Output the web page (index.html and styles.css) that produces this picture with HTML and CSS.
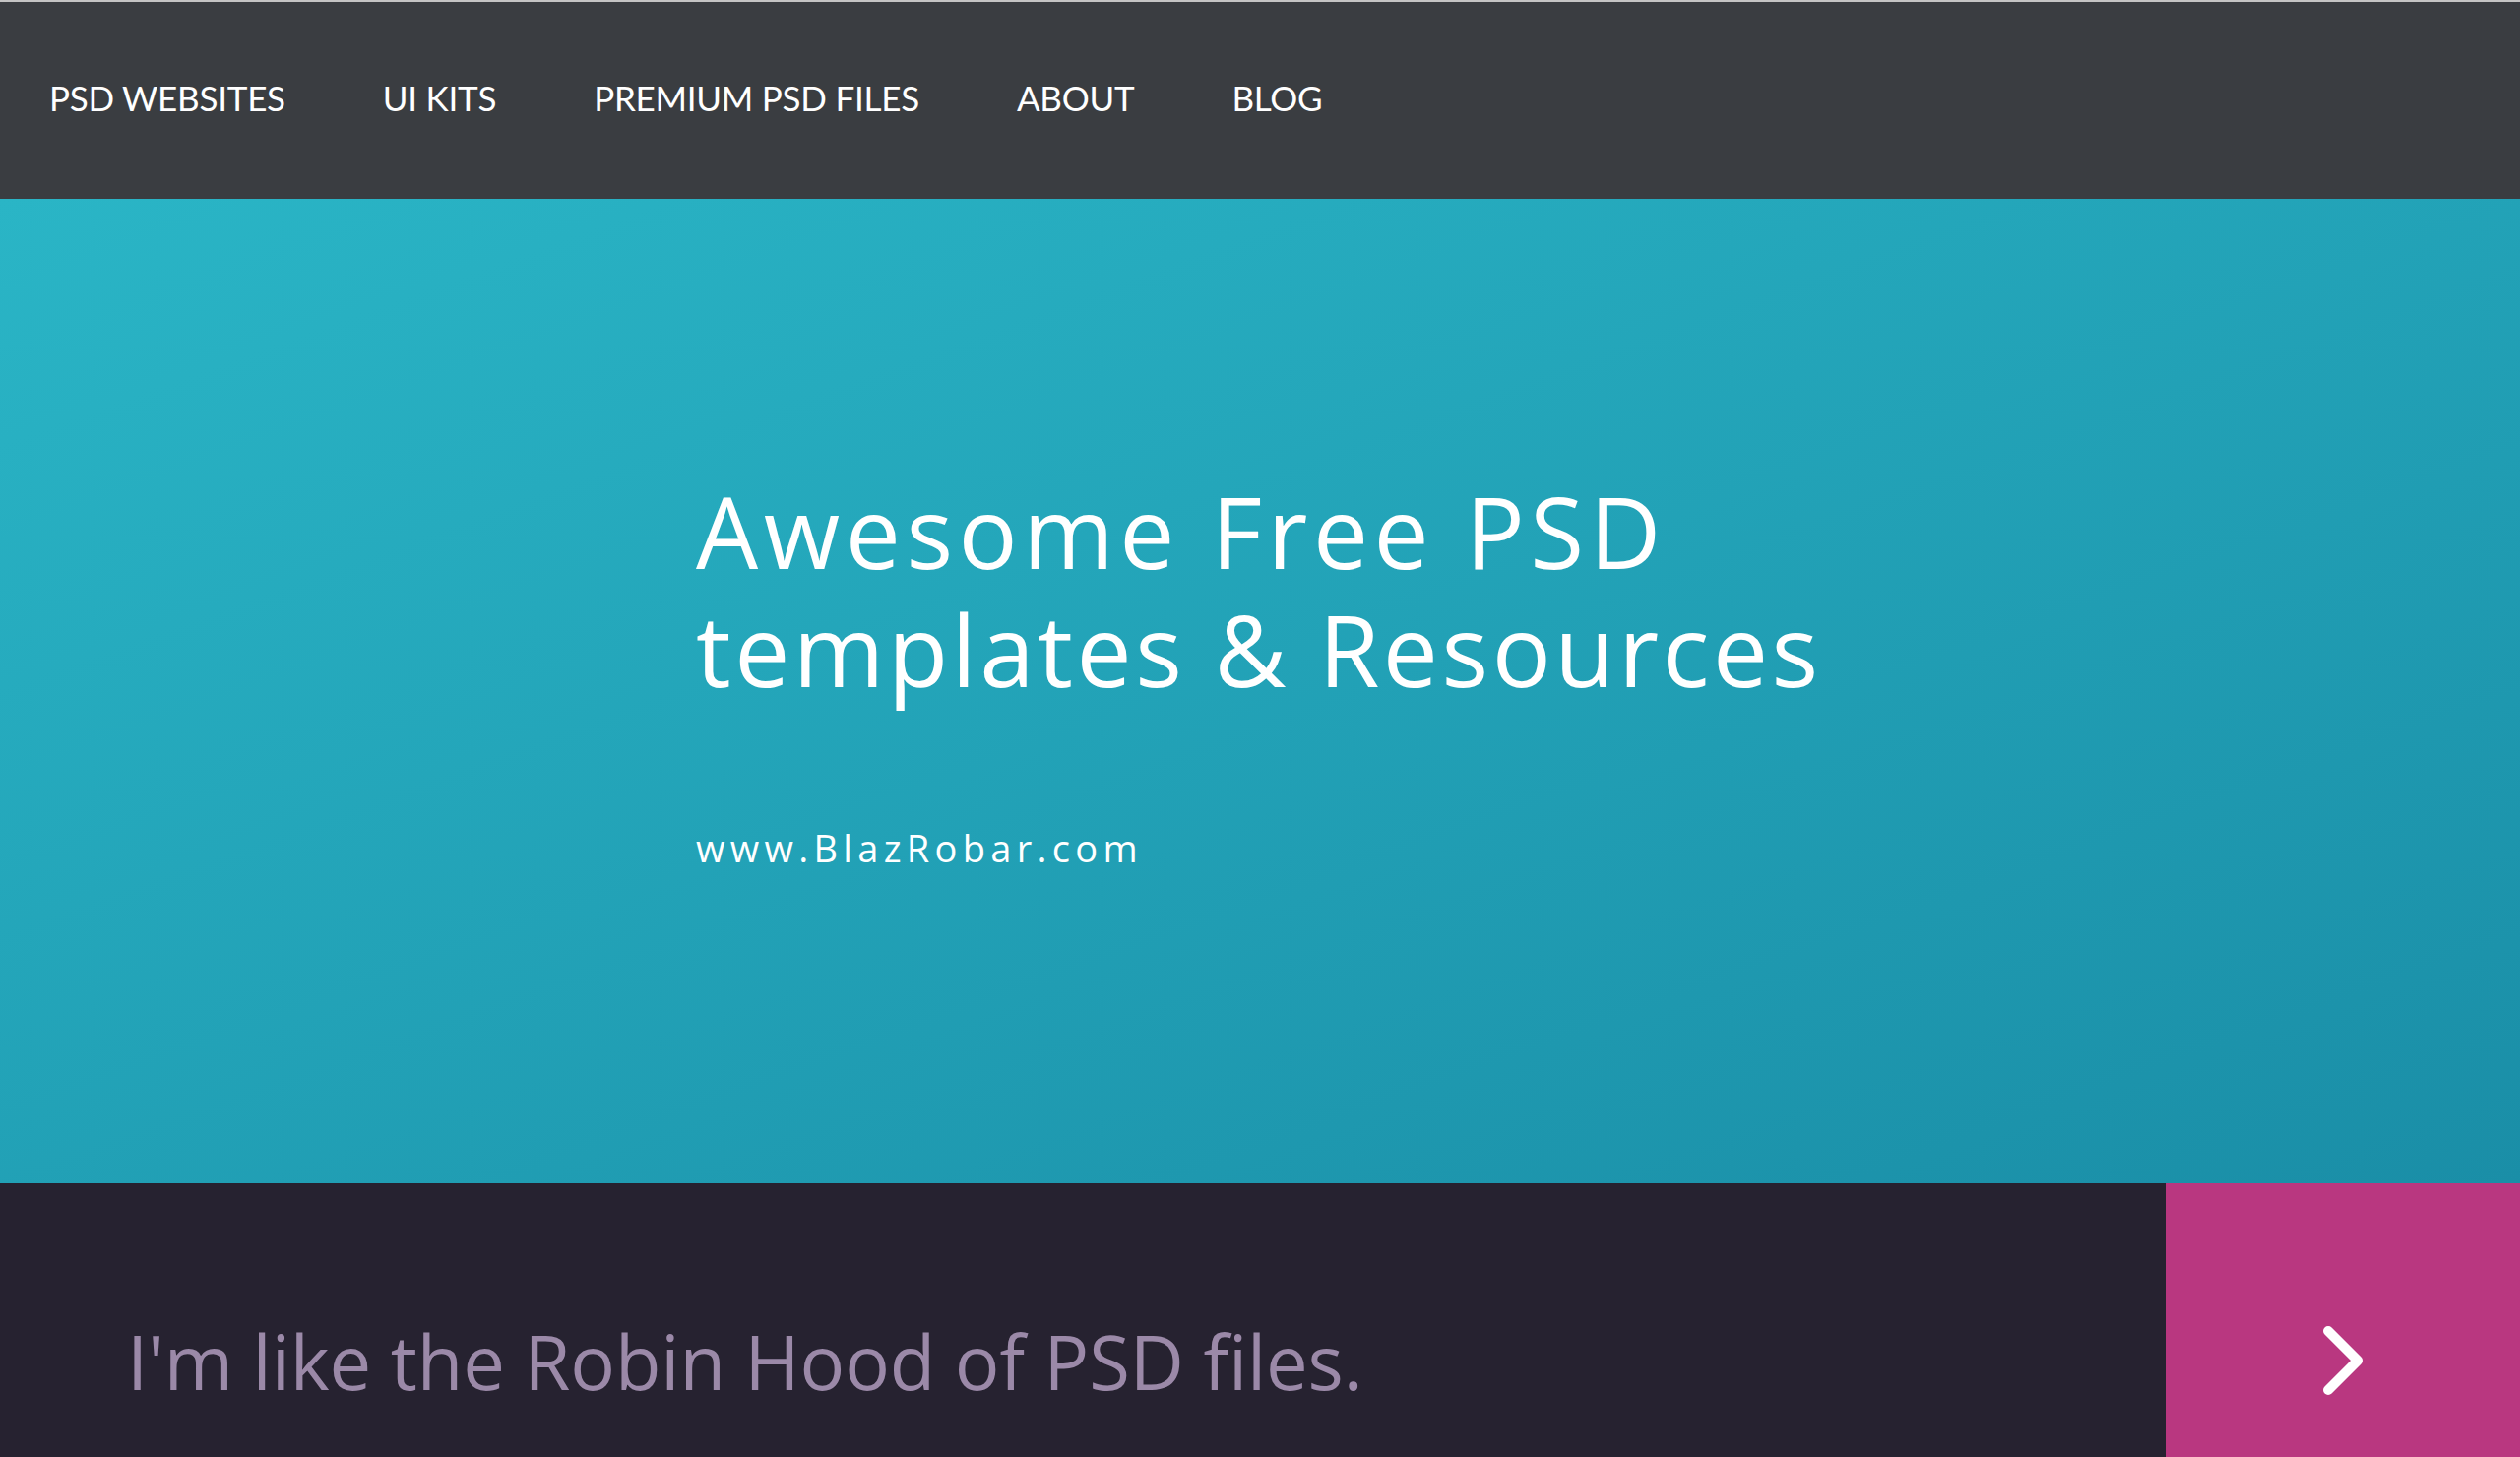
FILE: index.html
```html
<!DOCTYPE html>
<html lang="en">
<head>
<meta charset="utf-8">
<title>BlazRobar</title>
<link rel="stylesheet" href="styles.css">
</head>
<body>
<nav class="nav">
  <a class="nav-link" href="#">PSD WEBSITES</a>
  <a class="nav-link" href="#">UI KITS</a>
  <a class="nav-link" href="#">PREMIUM PSD FILES</a>
  <a class="nav-link" href="#">ABOUT</a>
  <a class="nav-link" href="#">BLOG</a>
</nav>
<header class="hero">
  <div class="hero-inner">
    <h1 class="hero-title"><span class="hero-line hero-line-a">Awesome Free PSD</span><span class="hero-line hero-line-b">templates &amp; Resources</span></h1>
    <p class="hero-url">www.BlazRobar.com</p>
  </div>
</header>
<section class="strip">
  <p class="strip-text">I'm like the Robin Hood of PSD files.</p>
  <a class="strip-btn" href="#" aria-label="Next">
    <svg width="42" height="72" viewBox="0 0 42 72"><polyline points="6,6 36,36 6,66" fill="none" stroke="#ffffff" stroke-width="10" stroke-linecap="round" stroke-linejoin="round"/></svg>
  </a>
</section>
</body>
</html>
```
FILE: styles.css
```css
html, body {
  margin: 0;
  padding: 0;
}
body {
  font-family: "Open Sans", "Liberation Sans", sans-serif;
  overflow: hidden;
  background: #262230;
}
.nav {
  box-sizing: border-box;
  height: 202px;
  border-top: 2px solid #c4c4c4;
  background: #3a3d41;
  display: flex;
  align-items: center;
  gap: 99px;
  padding-left: 50px;
  padding-bottom: 6px;
}
.nav-link {
  color: #ffffff;
  text-decoration: none;
  font-family: Lato, "Noto Sans", sans-serif;
  font-size: 35px;
  letter-spacing: -0.25px;
}
.hero {
  box-sizing: border-box;
  height: 1000px;
  background: linear-gradient(160deg, #2ab5c6 0%, #1a8ea7 100%);
  padding-top: 277px;
  padding-left: 707px;
}
.hero-title {
  margin: 0;
  color: #ffffff;
  font-weight: 400;
  font-size: 100px;
  line-height: 120px;
}
.hero-line {
  display: block;
  height: 120px;
}
.hero-line-a {
  letter-spacing: 5.5px;
}
.hero-line-b {
  letter-spacing: 3.5px;
}
.hero-url {
  margin: 122px 0 0 0;
  color: #ffffff;
  font-size: 38px;
  line-height: 40px;
  letter-spacing: 5.3px;
}
.strip {
  height: 360px;
  display: flex;
  align-items: center;
  background: #262230;
}
.strip-text {
  flex: 1;
  margin: 0;
  padding-left: 129px;
  color: #9b89a8;
  font-size: 76px;
  letter-spacing: -0.1px;
}
.strip-btn {
  width: 360px;
  height: 360px;
  background: #b93780;
  display: flex;
  align-items: center;
  justify-content: center;
}
```
